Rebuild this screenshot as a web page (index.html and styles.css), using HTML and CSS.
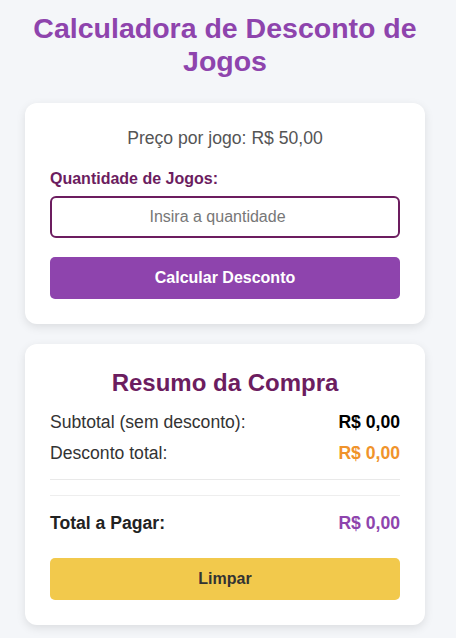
FILE: index.html
```html
<!DOCTYPE html>
<html lang="pt-BR">
<head>
<meta charset="utf-8">
<title>Calculadora de Desconto de Jogos</title>
<link rel="stylesheet" href="styles.css">
</head>
<body>
<div class="container">
  <h1 class="title">Calculadora de Desconto de Jogos</h1>
  <div class="card">
    <p class="price">Preço por jogo: R$ 50,00</p>
    <label class="label" for="qtd">Quantidade de Jogos:</label>
    <input class="input" id="qtd" type="number" placeholder="Insira a quantidade">
    <button class="btn btn-primary">Calcular Desconto</button>
  </div>
  <div class="card summary">
    <h2 class="subtitle">Resumo da Compra</h2>
    <div class="row"><span>Subtotal (sem desconto):</span><strong class="val">R$ 0,00</strong></div>
    <div class="row"><span>Desconto total:</span><strong class="val discount">R$ 0,00</strong></div>
    <hr class="divider">
    <div class="row total"><span>Total a Pagar:</span><strong class="val final">R$ 0,00</strong></div>
    <button class="btn btn-clear">Limpar</button>
  </div>
</div>
</body>
</html>
```
FILE: styles.css
```css
* { box-sizing: border-box; }
body {
  margin: 0;
  background: #f4f6f9;
  font-family: "Liberation Sans", Arial, sans-serif;
  color: #333;
}
.container {
  width: 400px;
  margin: 0 0 0 25px;
  padding: 11.5px 0 14px;
  display: flex;
  flex-direction: column;
}
.title {
  margin: 0 0 25.5px;
  font-size: 28.5px;
  line-height: 33px;
  text-align: center;
  color: #8e44ad;
}
.card {
  background: #fff;
  border-radius: 12px;
  box-shadow: 0 3px 10px rgba(0,0,0,0.1);
  padding: 25px;
  display: flex;
  flex-direction: column;
  margin-bottom: 20px;
}
.price {
  margin: 0 0 20px;
  text-align: center;
  font-size: 17.6px;
  line-height: 21px;
  color: #555;
}
.label {
  font-weight: bold;
  font-size: 16px;
  line-height: 19px;
  color: #6c1d5f;
  margin-bottom: 8px;
}
.input {
  height: 42px;
  border: 2px solid #6c1d5f;
  border-radius: 6px;
  text-align: center;
  font-family: inherit;
  font-size: 16px;
  padding: 0 10px;
  margin: 0 0 19px;
  color: #333;
}
.input::placeholder { color: #777; }
.btn {
  height: 42px;
  border: none;
  border-radius: 5px;
  font-family: inherit;
  font-size: 16px;
  font-weight: bold;
}
.btn-primary { background: #8e44ad; color: #fff; }
.btn-clear { background: #f2c94c; color: #333; margin-top: 24.5px; }
.subtitle {
  margin: 0 0 14.5px;
  text-align: center;
  font-size: 24px;
  line-height: 28px;
  color: #6c1d5f;
}
.row {
  display: flex;
  justify-content: space-between;
  align-items: center;
  font-size: 17.6px;
  line-height: 21px;
  color: #333;
  margin-bottom: 10px;
}
.val { color: #000; }
.discount { color: #f0932b; }
.divider {
  border: none;
  border-top: 1px solid #e9e9e9;
  margin: 5.5px 0 0;
  width: 100%;
}
.row.total {
  border-top: 1px solid #eee;
  margin-top: 15px;
  padding-top: 16.5px;
  margin-bottom: 0;
  font-weight: bold;
}
.row.total span { color: #222; }
.final { color: #8e44ad; }
```
